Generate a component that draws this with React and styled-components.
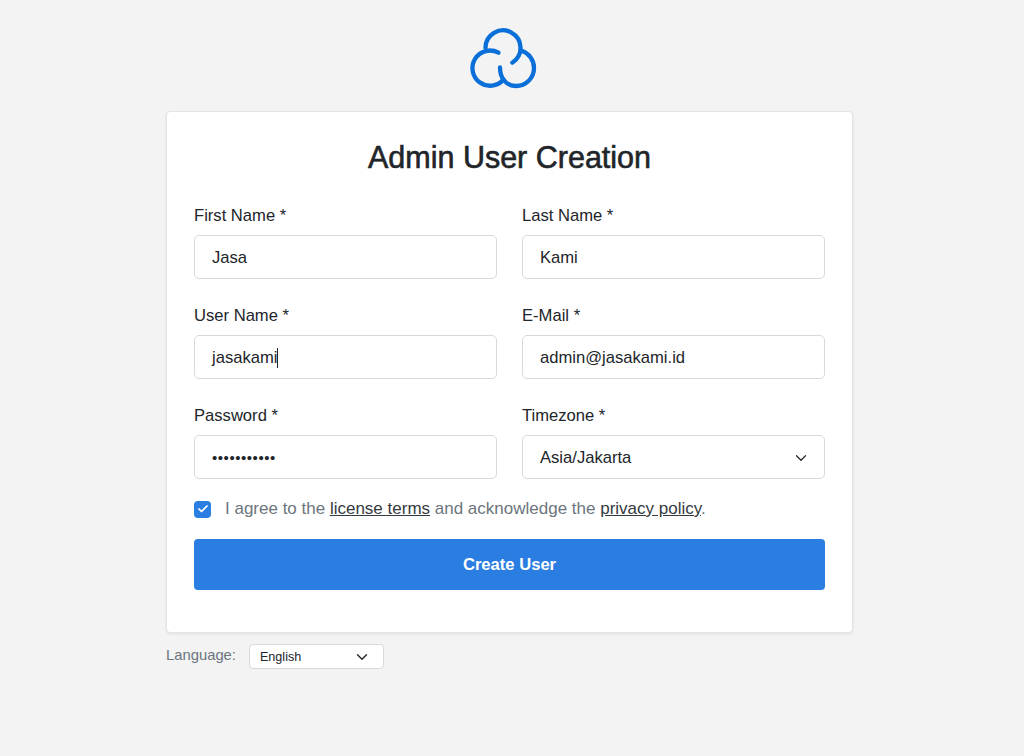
import styled, { createGlobalStyle } from "styled-components";
import { ChevronDown, Check } from "lucide-react";

const GlobalStyle = createGlobalStyle`
  html, body {
    margin: 0;
    background: #f3f3f3;
  }
  body {
    font-family: "Liberation Sans", Arial, sans-serif;
    color: #212529;
  }
`;

const Page = styled.div`
  width: 686.5px;
  height: 756px;
  margin-left: 166px;
  padding-top: 24px;
  box-sizing: border-box;
  display: flex;
  flex-direction: column;
`;

const Logo = styled.svg`
  display: block;
  flex: none;
  width: 80px;
  height: 68px;
  margin: 0 0 19px 298px;
`;

const Card = styled.div`
  height: 522px;
  box-sizing: border-box;
  padding: 28px 26.5px 0 27px;
  background: #fff;
  border: 1px solid #e4e4e4;
  border-radius: 4px;
  box-shadow: 0 1px 3px rgba(0, 0, 0, 0.08);
`;

const Title = styled.h1`
  margin: 0 0 30px;
  font-size: 30.5px;
  line-height: 34px;
  font-weight: 400;
  -webkit-text-stroke: 0.6px #212529;
  text-align: center;
  color: #212529;
`;

const FormGrid = styled.div`
  display: grid;
  grid-template-columns: 303px 303px;
  column-gap: 25px;
  row-gap: 25px;
`;

const Group = styled.div`
  display: flex;
  flex-direction: column;
`;

const Label = styled.label`
  font-size: 16.6px;
  line-height: 24px;
  margin-bottom: 7px;
  color: #212529;
`;

const Field = styled.div`
  height: 44px;
  box-sizing: border-box;
  padding: 2px 14px 0 17px;
  display: flex;
  align-items: center;
  justify-content: space-between;
  font-size: 16.6px;
  color: #212529;
  background: #fff;
  border: 1px solid #d8d9df;
  border-radius: 5px;
`;

const Caret = styled.span`
  display: inline-block;
  width: 1px;
  height: 20px;
  vertical-align: -5px;
  background: #212529;
`;

const Dots = styled.span`
  font-size: 15px;
  letter-spacing: 0.55px;
`;

const Agree = styled.div`
  margin-top: 18px;
  height: 24px;
  display: flex;
  align-items: center;
  gap: 14px;
  font-size: 17px;
  color: #6c757d;
`;

const Box = styled.span`
  width: 17px;
  height: 17px;
  display: flex;
  align-items: center;
  justify-content: center;
  background: #2a7de1;
  border-radius: 4px;
  color: #fff;
`;

const TermsLink = styled.a`
  color: #343a40;
  text-decoration: underline;
`;

const Submit = styled.button`
  display: block;
  width: 100%;
  height: 51px;
  margin-top: 18px;
  border: 0;
  border-radius: 4px;
  background: #2a7de1;
  color: #fff;
  font-family: inherit;
  font-size: 16.6px;
  font-weight: 700;
`;

const LanguageRow = styled.div`
  margin-top: 11px;
  display: flex;
  align-items: center;
  gap: 13px;
`;

const LanguageLabel = styled.span`
  font-size: 14.8px;
  margin-top: -4px;
  color: #6c757d;
`;

const LanguageSelect = styled.div`
  width: 135px;
  height: 25px;
  box-sizing: border-box;
  padding: 0 12px 0 10px;
  display: flex;
  align-items: center;
  justify-content: space-between;
  font-size: 12.6px;
  color: #212529;
  background: #fff;
  border: 1px solid #d8d9df;
  border-radius: 4px;
`;

const fields = [
  { label: "First Name *", value: "Jasa" },
  { label: "Last Name *", value: "Kami" },
  { label: "User Name *", value: "jasakami", caret: true },
  { label: "E-Mail *", value: "admin@jasakami.id" },
  { label: "Password *", value: <Dots>•••••••••••</Dots> },
  { label: "Timezone *", value: "Asia/Jakarta", select: true },
];

const App = () => {
  return (
    <>
      <GlobalStyle />
      <Page>
        <Logo viewBox="464 24 80 68" fill="none" stroke="#0a6fd8" strokeWidth="4.3" strokeLinecap="round">
          <path d="M485.5 48 A17.5 17.5 0 1 1 512.3 62.7" />
          <path d="M498.5 52.7 A17.6 17.6 0 1 0 503.5 79.5" />
          <path d="M500 67.5 C500 78 506 86 516 86 A18 18 0 0 0 534 68 A18 18 0 0 0 521.7 50.8" />
        </Logo>
        <Card>
          <Title>Admin User Creation</Title>
          <FormGrid>
            {fields.map((field) => (
              <Group key={field.label}>
                <Label>{field.label}</Label>
                <Field>
                  <span>
                    {field.value}
                    {field.caret && <Caret />}
                  </span>
                  {field.select && <ChevronDown size={18} strokeWidth={1.6} />}
                </Field>
              </Group>
            ))}
          </FormGrid>
          <Agree>
            <Box>
              <Check size={12} strokeWidth={3.5} />
            </Box>
            <span>
              I agree to the <TermsLink>license terms</TermsLink> and acknowledge the{" "}
              <TermsLink>privacy policy</TermsLink>.
            </span>
          </Agree>
          <Submit>Create User</Submit>
        </Card>
        <LanguageRow>
          <LanguageLabel>Language:</LanguageLabel>
          <LanguageSelect>
            English
            <ChevronDown size={18} strokeWidth={1.8} />
          </LanguageSelect>
        </LanguageRow>
      </Page>
    </>
  );
};

export default App;
